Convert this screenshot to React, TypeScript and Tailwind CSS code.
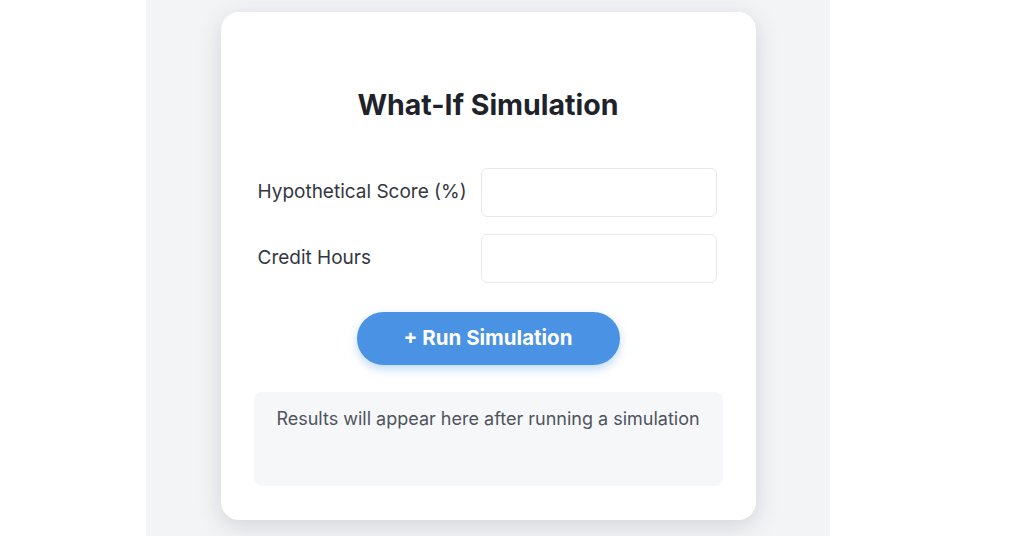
import { useState } from "react";

const font = { fontFamily: "Inter, 'Liberation Sans', sans-serif" };

const Field = ({ label, value, onChange }: { label: string; value: string; onChange: (v: string) => void }) => (
  <div className="flex items-center px-1">
    <label className="w-[223px] shrink-0 text-[19px] text-[#333740]">{label}</label>
    <input
      type="number"
      value={value}
      onChange={(e) => onChange(e.target.value)}
      className="h-[49px] w-[236px] rounded-md border border-[#e6e8eb] bg-white px-3 text-[16px] outline-none"
    />
  </div>
);

export default function App() {
  const [score, setScore] = useState("");
  const [hours, setHours] = useState("");

  return (
    <div className="h-[536px] w-[1024px] overflow-hidden bg-white" style={font}>
      <div className="ml-[146px] flex h-full w-[684px] justify-center bg-[#f3f4f6] pt-[12px]">
        <section className="h-[508px] w-[535px] rounded-[18px] bg-white px-[33px] pt-[76px] shadow-[0_6px_24px_rgba(40,50,70,0.16)]">
          <h2 className="text-center text-[28.5px] font-bold leading-[34px] text-[#1e232b]">What-If Simulation</h2>

          <div className="mt-[46px] flex flex-col gap-[17px]">
            <Field label="Hypothetical Score (%)" value={score} onChange={setScore} />
            <Field label="Credit Hours" value={hours} onChange={setHours} />
          </div>

          <div className="mt-[29px] flex justify-center">
            <button className="h-[53px] w-[263px] rounded-full bg-[#4a92e3] text-[20.5px] font-bold text-white shadow-[0_4px_10px_rgba(74,146,227,0.35)]">
              + Run Simulation
            </button>
          </div>

          <div className="mt-[27px] h-[94px] rounded-lg bg-[#f6f7f9] pt-[15px] text-center text-[18px] leading-[24px] text-[#4f545c]">
            Results will appear here after running a simulation
          </div>
        </section>
      </div>
    </div>
  );
}
